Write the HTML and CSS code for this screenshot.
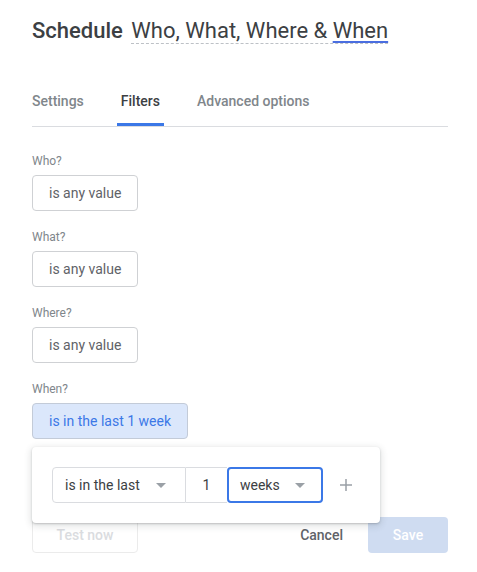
FILE: index.html
```html
<!DOCTYPE html>
<html lang="en">

<head>
  <meta charset="utf-8">
  <title>Schedule</title>
  <link rel="stylesheet" href="styles.css">
</head>

<body>
  <div class="dialog">
    <h1 class="title">Schedule <span class="title-input">Who, What, Where &amp; <span class="spell">When</span></span></h1>

    <nav class="tabs">
      <span class="tab">Settings</span>
      <span class="tab active">Filters</span>
      <span class="tab">Advanced options</span>
    </nav>

    <div class="filters">
      <div class="field">
        <label>Who?</label>
        <button class="chip">is any value</button>
      </div>
      <div class="field">
        <label>What?</label>
        <button class="chip">is any value</button>
      </div>
      <div class="field">
        <label>Where?</label>
        <button class="chip">is any value</button>
      </div>
      <div class="field when">
        <label>When?</label>
        <button class="chip selected">is in the last 1 week</button>
        <div class="popup">
          <div class="picker">
            <div class="select op">is in the last <span class="caret"></span></div>
            <div class="num">1</div>
            <div class="select unit">weeks <span class="caret"></span></div>
          </div>
          <svg class="plus" width="12" height="12" viewBox="0 0 12 12">
            <path d="M6 0v12M0 6h12" stroke="#9aa0a6" stroke-width="1.5" fill="none" />
          </svg>
        </div>
      </div>
    </div>

    <footer class="actions">
      <button class="btn outline">Test now</button>
      <div class="right">
        <button class="btn text">Cancel</button>
        <button class="btn primary">Save</button>
      </div>
    </footer>
  </div>
</body>

</html>
```

FILE: styles.css
```css
* {
  margin: 0;
  padding: 0;
  box-sizing: border-box;
  font-family: Roboto, 'Liberation Sans', Arial, sans-serif;
}

body {
  background: #fff;
}

.dialog {
  width: 416px;
  margin-left: 32px;
  padding-top: 17px;
}

.title {
  font-size: 22px;
  line-height: 28px;
  font-weight: 500;
  color: #3c4043;
  margin-bottom: 46px;
}

.title-input {
  font-weight: 400;
  margin-left: 3px;
  border-bottom: 1px dashed #bdc1c6;
}

/* spell-check style mark under the last word */
.spell {
  text-decoration: underline;
  text-decoration-color: #4a6ee0;
  text-underline-offset: 3px;
  text-decoration-thickness: 1.5px;
}

.tabs {
  display: flex;
  gap: 37px;
  border-bottom: 1px solid #dadce0;
}

.tab {
  position: relative;
  font-size: 14px;
  line-height: 20px;
  font-weight: 500;
  color: #80868b;
  padding-bottom: 15px;
}

.tab.active {
  color: #3c4043;
}

.tab.active::after {
  content: "";
  position: absolute;
  left: -4px;
  right: -4px;
  bottom: 0;
  height: 3px;
  background: #3b78e7;
}

.filters {
  padding-top: 26px;
  display: flex;
  flex-direction: column;
  gap: 18px;
}

.field {
  display: flex;
  flex-direction: column;
  align-items: flex-start;
}

.field label {
  font-size: 12px;
  line-height: 16px;
  color: #80868b;
  margin-bottom: 6px;
}

.chip {
  height: 36px;
  padding: 0 16px;
  border: 1px solid #cfd1d4;
  border-radius: 4px;
  background: #fff;
  font-size: 14px;
  color: #5f6368;
}

.chip.selected {
  background: #dbe7fb;
  border-color: #c3cbd8;
  color: #3b78e7;
}

.when {
  position: relative;
}

.popup {
  position: absolute;
  top: calc(100% + 8px);
  left: 0;
  width: 348px;
  padding: 20px;
  display: flex;
  align-items: center;
  background: #fff;
  border-radius: 4px;
  box-shadow: 0 1px 2px rgba(60, 64, 67, 0.25), 0 2px 6px 2px rgba(60, 64, 67, 0.12);
  z-index: 2;
}

.picker {
  display: flex;
  height: 36px;
}

.select {
  display: flex;
  align-items: center;
  justify-content: space-between;
  font-size: 14px;
  color: #3c4043;
}

.select.op {
  width: 134px;
  padding: 0 19px 0 12px;
  border: 1px solid #dadce0;
  border-radius: 4px 0 0 4px;
}

.num {
  width: 41px;
  display: flex;
  align-items: center;
  justify-content: center;
  font-size: 14px;
  color: #3c4043;
  border-top: 1px solid #dadce0;
  border-bottom: 1px solid #dadce0;
}

.select.unit {
  width: 96px;
  padding: 0 16px 0 11px;
  border: 2px solid #3b78e7;
  border-radius: 4px;
}

.caret {
  width: 0;
  height: 0;
  border-left: 5px solid transparent;
  border-right: 5px solid transparent;
  border-top: 5px solid #9aa0a6;
}

.plus {
  margin-left: 17px;
}

.actions {
  margin-top: 78px;
  display: flex;
  justify-content: space-between;
}

.actions .right {
  display: flex;
  gap: 9px;
}

.btn {
  height: 36px;
  padding: 0 16px;
  border: none;
  border-radius: 4px;
  background: none;
  font-size: 14px;
  font-weight: 500;
}

.btn.outline {
  width: 106px;
  border: 1px solid #ebebeb;
  color: #dadce0;
}

.btn.text {
  color: #5f6368;
}

.btn.primary {
  width: 80px;
  background: #cfdcf1;
  color: #fff;
}
```
